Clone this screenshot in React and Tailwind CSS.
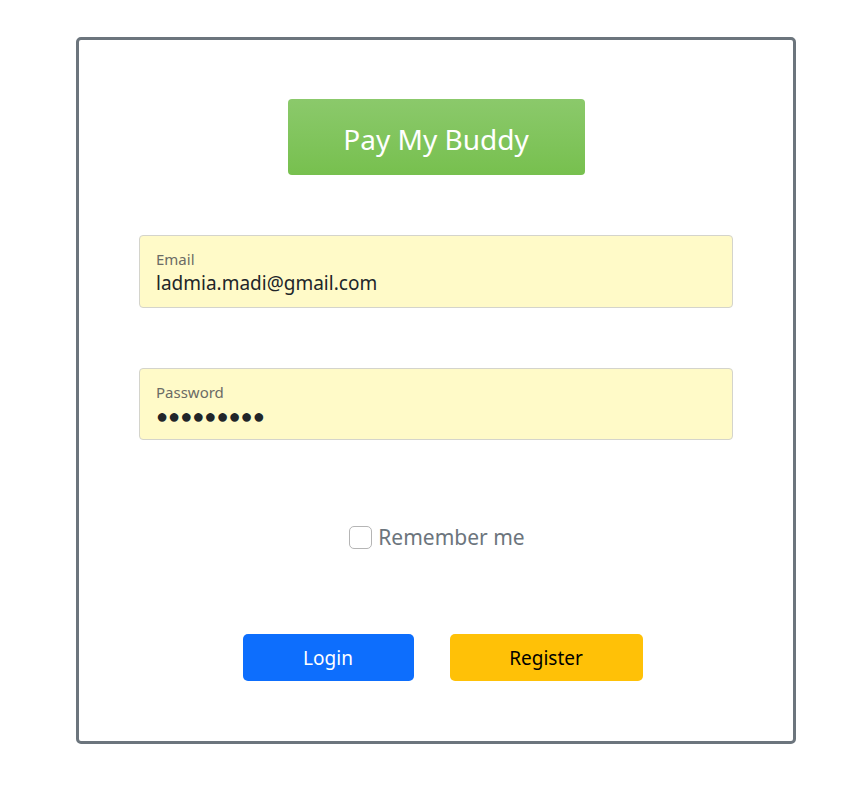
export default function App() {
  return (
    <div className="min-h-[806px] bg-white pt-[37px]" style={{ fontFamily: '"Segoe UI", "Noto Sans", sans-serif' }}>
      <div className="ml-[76px] w-[720px] h-[707px] border-[3px] border-[#6c757d] rounded-[5px] flex flex-col items-center">
        {/* LOGO */}
        <div className="mt-[59px] w-[297px] h-[76px] rounded-[4px] bg-gradient-to-b from-[#8bc96b] to-[#77c04e] flex items-center justify-center pt-[3px] text-white text-[28px]">
          Pay My Buddy
        </div>

        {/* EMAIL */}
        <div className="mt-[60px] w-[594px] h-[73px] bg-[#fffac8] border border-[#d4d4cc] rounded-[4px] px-4 pt-[13px]">
          <div className="text-[15px] leading-[20px] text-[#6b6b65]">Email</div>
          <div className="text-[19px] leading-[28px] text-[#212529]">ladmia.madi@gmail.com</div>
        </div>

        {/* PASSWORD */}
        <div className="mt-[60px] w-[594px] h-[72px] bg-[#fffac8] border border-[#d4d4cc] rounded-[4px] px-4 pt-[13px]">
          <div className="text-[15px] leading-[20px] text-[#6b6b65]">Password</div>
          <div className="text-[20px] leading-[28px] text-[#212529]">●●●●●●●●●</div>
        </div>

        {/* REMEMBER */}
        <label className="mt-[82px] ml-[2px] flex items-center gap-[6px] text-[21px] text-[#6c757d]">
          <span className="w-[23px] h-[23px] border border-[#b5b5b5] rounded-[5px] bg-white" />
          Remember me
        </label>

        {/* BUTTONS */}
        <div className="mt-[80px] flex gap-[36px] ml-[13px]">
          <button className="w-[171px] h-[47px] rounded-[5px] bg-[#0d6efd] text-white text-[19px] pt-[3px]">Login</button>
          <button className="w-[193px] h-[47px] rounded-[5px] bg-[#ffc107] text-black text-[19px] pt-[3px]">Register</button>
        </div>
      </div>
    </div>
  );
}
